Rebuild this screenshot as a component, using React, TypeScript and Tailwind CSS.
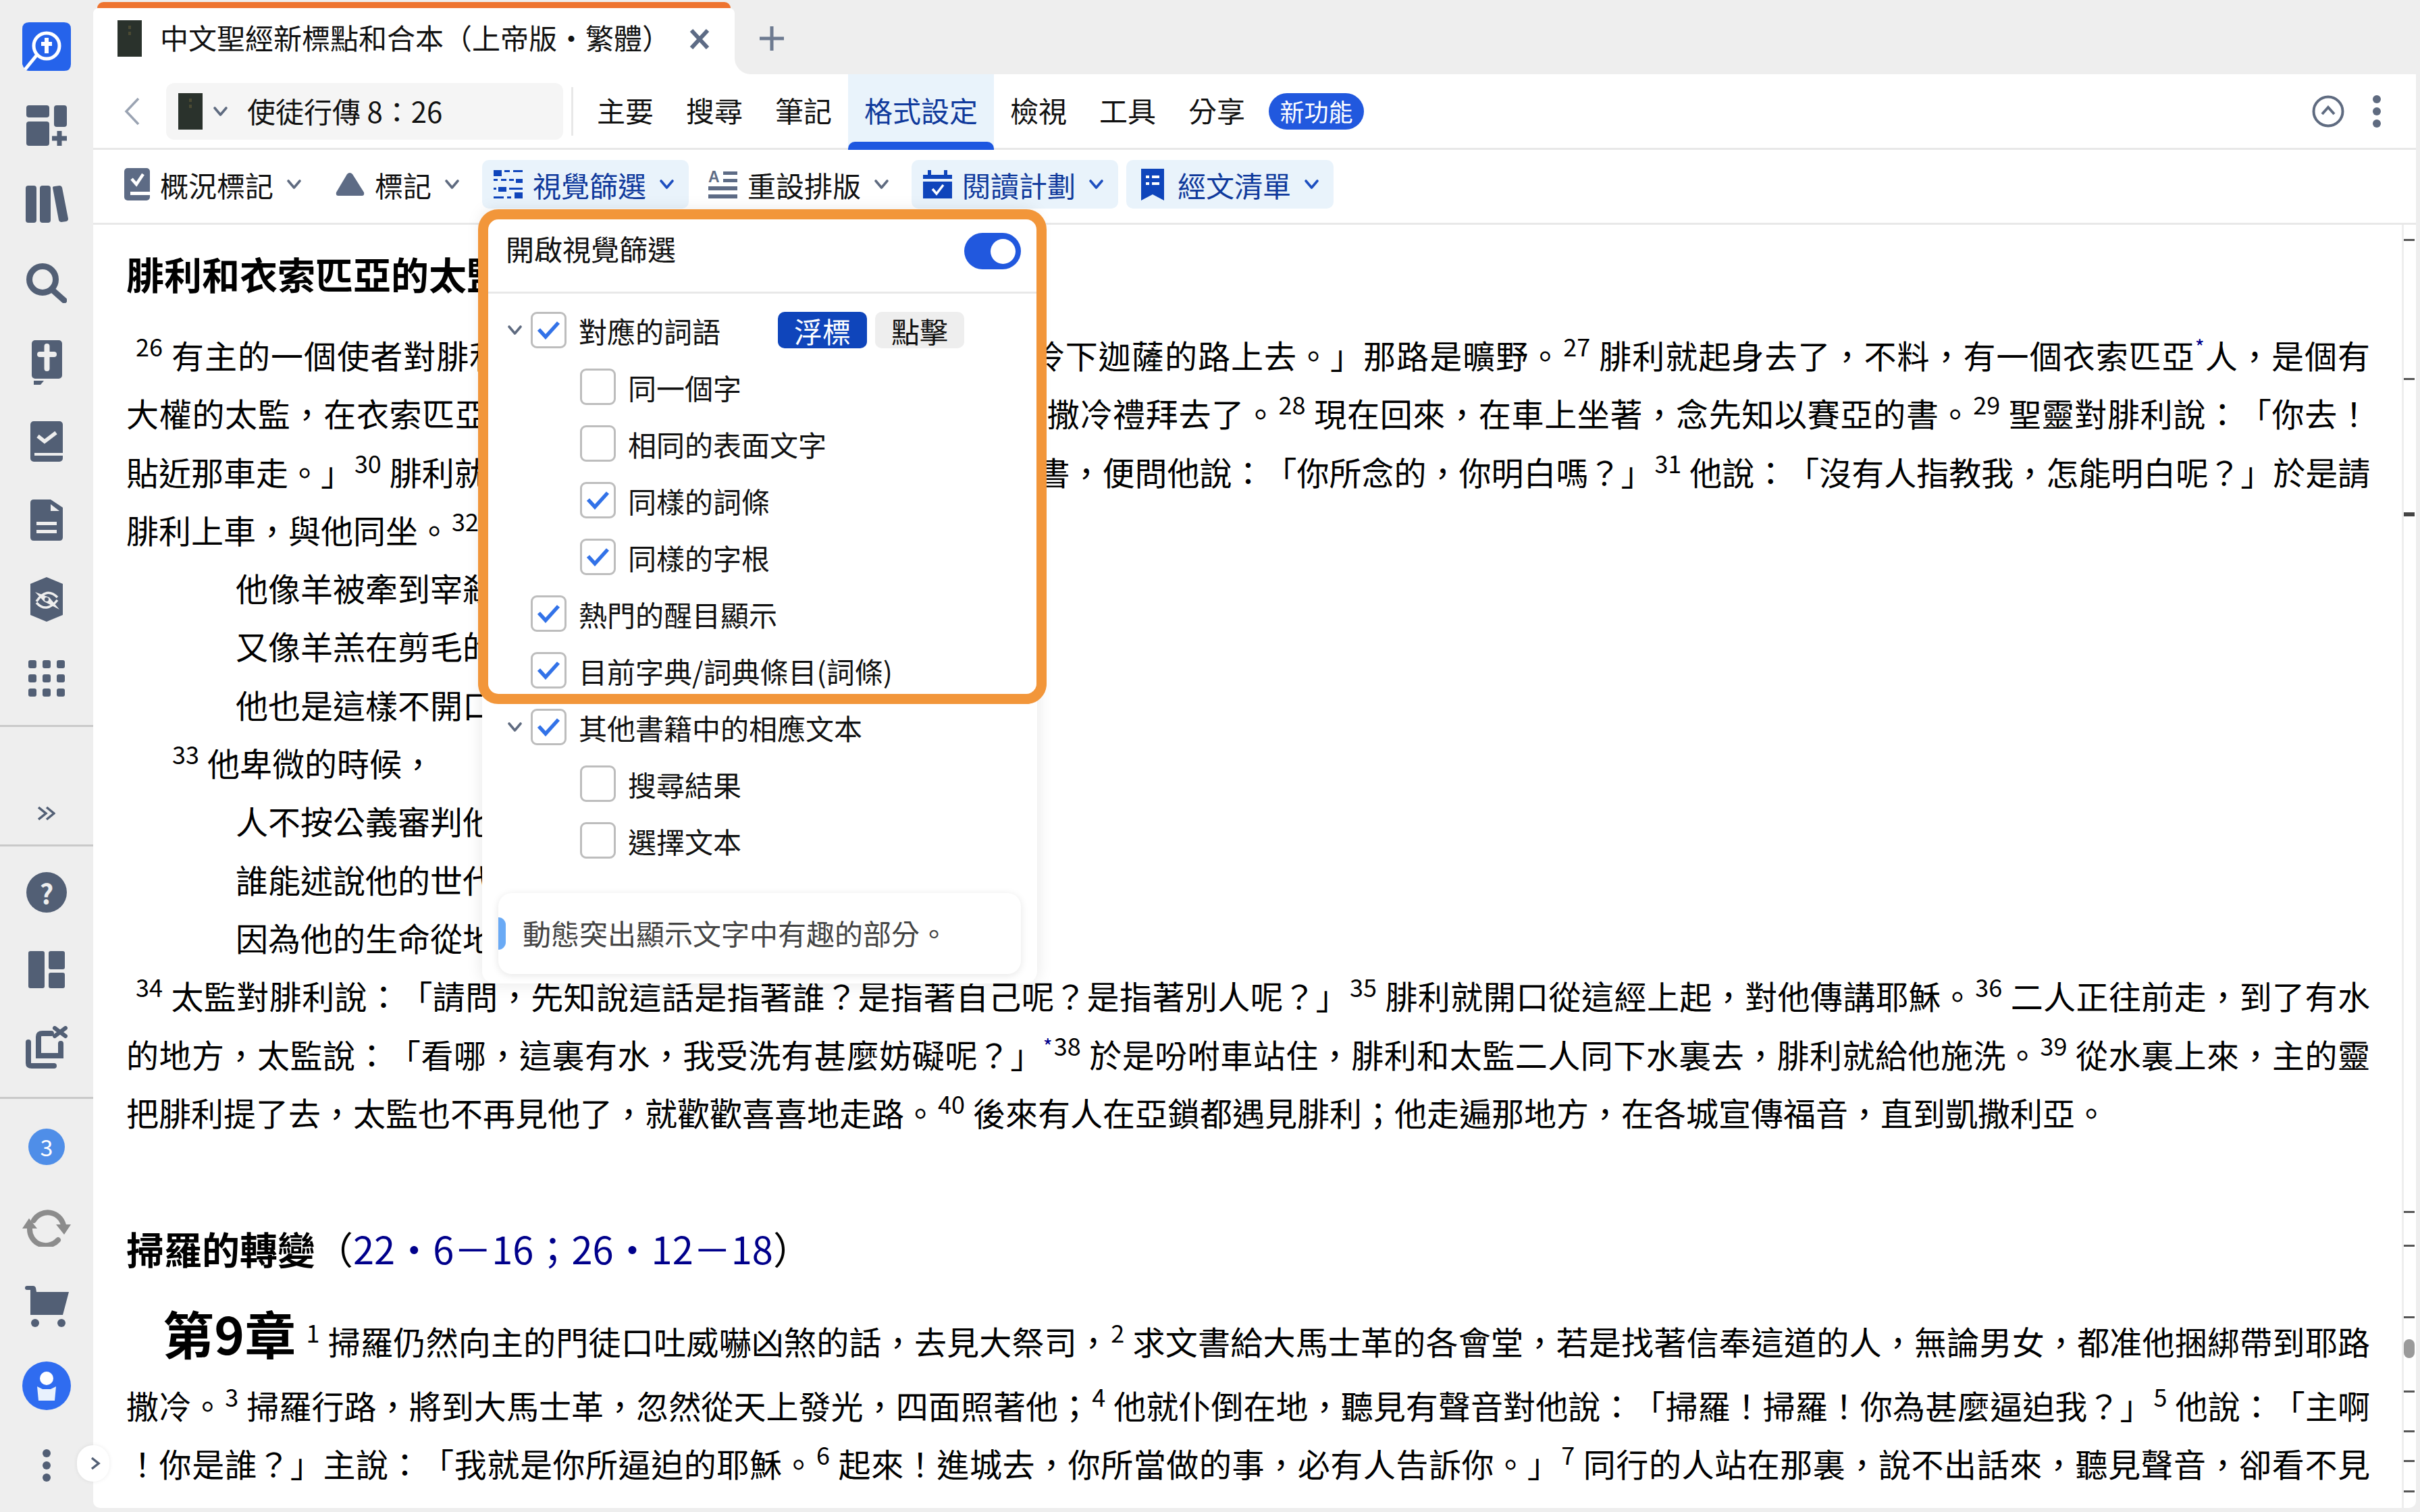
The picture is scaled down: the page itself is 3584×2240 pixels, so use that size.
import React from "react";

const railGray = "#525f75";
const iconGray = "#5d6b85";
const deepBlue = "#0f45bb";

const Chevron = ({ color = "#5f6b80" }: { color?: string }) => (
  <svg width="23" height="16" viewBox="0 0 23 16" fill="none" className="shrink-0">
    <path d="M3 3 L11.5 13 L20 3" stroke={color} strokeWidth="3.6" strokeLinecap="round" strokeLinejoin="round" />
  </svg>
);

const BookThumb = () => (
  <div className="flex h-[54px] w-[36px] shrink-0 flex-col items-center gap-[4px] bg-[#2a322c] pt-[8px]">
    <span className="h-[5px] w-[4px] bg-[#4b4a33]" />
    <span className="h-[5px] w-[4px] bg-[#4b4a33]" />
  </div>
);

/* rail icons */
const Logo = () => (
  <svg width="72" height="72" viewBox="0 0 72 72">
    <path d="M10 0 H62 Q72 0 72 10 V62 Q72 72 62 72 H10 Q3 72 0 62 V10 Q0 0 10 0 Z" fill="#2563eb" />
    <circle cx="36" cy="35" r="19" fill="#2563eb" stroke="#fff" strokeWidth="5" />
    <path d="M22 48 L4 70" stroke="#fff" strokeWidth="5" />
    <path d="M36 23 V46 M28 32 H44" stroke="#fff" strokeWidth="6" />
  </svg>
);
const DashAdd = () => (
  <svg width="60" height="60" viewBox="0 0 60 60" fill={railGray}>
    <rect x="0" y="0" width="34" height="18" rx="4" />
    <rect x="41" y="0" width="19" height="32" rx="4" />
    <rect x="0" y="24" width="34" height="36" rx="4" />
    <path d="M49 38 V60 M38 49 H60" stroke={railGray} strokeWidth="7" />
  </svg>
);
const Books = () => (
  <svg width="63" height="55" viewBox="0 0 63 55" fill={railGray}>
    <rect x="0" y="0" width="16" height="55" rx="4" />
    <rect x="21" y="0" width="16" height="55" rx="4" />
    <path d="M40 3 Q40 1 43 1 L50 0 Q53 0 54 3 L63 49 Q63 52 60 53 L53 54 Q50 54 49 51 Z" />
  </svg>
);
const SearchIcon = () => (
  <svg width="60" height="59" viewBox="0 0 60 59" fill="none" stroke={railGray}>
    <circle cx="24" cy="24" r="19.5" strokeWidth="9" />
    <path d="M38 39 L56 55" strokeWidth="9" strokeLinecap="round" />
  </svg>
);
const BibleIcon = () => (
  <svg width="45" height="66" viewBox="0 0 45 66" fill={railGray}>
    <rect x="0" y="0" width="45" height="57" rx="5" />
    <path d="M3 60 H18 L13 66 H3 Z" />
    <path d="M22.5 9 V42 M12 21 H33" stroke="#eeeeee" strokeWidth="8" strokeLinecap="round" />
  </svg>
);
const NotebookIcon = () => (
  <svg width="48" height="60" viewBox="0 0 48 60" fill={railGray}>
    <rect x="0" y="0" width="48" height="60" rx="5" />
    <path d="M11 22 L21 30 L38 17" fill="none" stroke="#eeeeee" strokeWidth="5.5" />
    <rect x="6" y="47" width="42" height="4" fill="#eeeeee" />
  </svg>
);
const DocIcon = () => (
  <svg width="48" height="61" viewBox="0 0 48 61" fill={railGray}>
    <path d="M5 0 H30 L48 12 V56 Q48 61 43 61 H5 Q0 61 0 56 V5 Q0 0 5 0 Z" />
    <path d="M30 7 L43 17 H30 Z" fill="#eeeeee" />
    <rect x="9" y="33" width="30" height="5" fill="#eeeeee" />
    <rect x="9" y="45" width="30" height="5" fill="#eeeeee" />
  </svg>
);
const CompassIcon = () => (
  <svg width="48" height="66" viewBox="0 0 48 66">
    <path d="M24 0 L48 10 V56 L24 66 L0 56 V10 Z" fill={railGray} />
    <path d="M9 36 Q24 14 40 30 M40 34 Q24 54 9 38" fill="none" stroke="#eeeeee" strokeWidth="3.5" />
    <path d="M7 22 L28 30 L43 48 L20 36 Z" fill="#eeeeee" />
    <circle cx="24" cy="33" r="3" fill={railGray} />
  </svg>
);
const AppsGrid = () => (
  <svg width="54" height="54" viewBox="0 0 54 54" fill={railGray}>
    {[0, 21, 42].map((y) =>
      [0, 21, 42].map((x) => <rect key={`${x}-${y}`} x={x} y={y} width="12" height="12" rx="3" />)
    )}
  </svg>
);
const PanelsIcon = () => (
  <svg width="54" height="55" viewBox="0 0 54 55" fill={railGray}>
    <rect x="0" y="0" width="24" height="55" rx="3" />
    <rect x="30" y="0" width="24" height="27" rx="3" />
    <rect x="30" y="32" width="24" height="23" rx="3" />
  </svg>
);
const CloseAllIcon = () => (
  <svg width="62" height="63" viewBox="0 0 62 63" fill="none" stroke={railGray}>
    <path d="M4 24 V55 Q4 59 9 59 H42" strokeWidth="8" strokeLinecap="round" />
    <path d="M38 11 H25 Q19 11 19 16 V44 H52 V26" strokeWidth="8" strokeLinecap="round" />
    <path d="M43 3 L59 15 M59 3 L43 15" strokeWidth="6" strokeLinecap="round" />
  </svg>
);
const SyncIcon = () => (
  <svg width="72" height="60" viewBox="0 0 72 60" fill="#8c8c8c">
    <path d="M17 21 A24 24 0 0 1 61 28 M11 33 A24 24 0 0 0 53 50" fill="none" stroke="#8c8c8c" strokeWidth="8" strokeLinecap="round" />
    <path d="M0 33 H22 L10 18 Z M50 27 H72 L62 42 Z" />
  </svg>
);
const CartIcon = () => (
  <svg width="65" height="61" viewBox="0 0 65 61" fill={railGray}>
    <path d="M3 0 H12 Q15 0 16 3 L17 9 H65 L56 43 H8 V6 H3 Q0 6 0 3 Q0 0 3 0 Z" />
    <ellipse cx="15" cy="55" rx="6" ry="6" />
    <ellipse cx="54" cy="55" rx="6" ry="6" />
  </svg>
);
const UserIcon = () => (
  <svg width="72" height="72" viewBox="0 0 72 72">
    <circle cx="36" cy="36" r="36" fill="#2f6cf0" />
    <circle cx="36" cy="25" r="10" fill="#fff" />
    <path d="M22 37 L30 41 H42 L50 37 L48 58 H24 Z" fill="#e8f1fd" />
  </svg>
);

/* toolbar icons */
const SummaryIcon = () => (
  <svg width="38" height="48" viewBox="0 0 38 48" fill={iconGray}>
    <rect x="0" y="0" width="38" height="48" rx="5" />
    <rect x="9" y="35" width="29" height="5" fill="#fff" />
    <path d="M11 16 L18 24 L28 9" fill="none" stroke="#fff" strokeWidth="4.5" />
  </svg>
);
const TriangleIcon = () => (
  <svg width="43" height="36" viewBox="0 0 43 36" fill={iconGray}>
    <path d="M17 3 Q21 -1 25 3 L42 30 Q43 35 39 35 H4 Q0 35 1 30 Z" />
  </svg>
);
const FilterIcon = () => (
  <svg width="43" height="42" viewBox="0 0 43 42" fill={deepBlue}>
    <rect x="0" y="0" width="12" height="9" />
    <rect x="16" y="0" width="8" height="3" />
    <rect x="29" y="0" width="14" height="3" />
    <rect x="0" y="13" width="6" height="3" />
    <rect x="11" y="13" width="8" height="3" />
    <rect x="23" y="13" width="7" height="3" />
    <rect x="33" y="13" width="10" height="6" />
    <rect x="0" y="26" width="4" height="3" />
    <rect x="7" y="25" width="12" height="7" />
    <rect x="23" y="26" width="20" height="3" />
    <rect x="0" y="39" width="15" height="3" />
    <rect x="20" y="39" width="6" height="3" />
    <rect x="31" y="33" width="12" height="9" />
  </svg>
);
const ResetIcon = () => (
  <svg width="43" height="42" viewBox="0 0 43 42" fill={iconGray}>
    <text x="0" y="18" fontSize="23" fontWeight="700" fontFamily="'Liberation Sans', sans-serif">A</text>
    <rect x="22" y="2" width="21" height="5" />
    <rect x="22" y="13" width="21" height="5" />
    <rect x="0" y="24" width="43" height="6" />
    <rect x="0" y="36" width="43" height="6" />
  </svg>
);
const PlanIcon = () => (
  <svg width="43" height="42" viewBox="0 0 43 42" fill={deepBlue}>
    <rect x="7" y="0" width="5" height="7" />
    <rect x="31" y="0" width="5" height="7" />
    <rect x="0" y="7" width="43" height="6" />
    <rect x="0" y="17" width="43" height="25" />
    <path d="M14 28 L20 35 L30 22" fill="none" stroke="#fff" strokeWidth="3.5" />
  </svg>
);
const ListIcon = () => (
  <svg width="44" height="47" viewBox="0 0 44 47" fill={deepBlue}>
    <path d="M5 0 H39 V47 L22 38 L5 47 Z" />
    <rect x="12" y="10" width="5" height="4" fill="#fff" />
    <rect x="21" y="10" width="11" height="4" fill="#fff" />
    <rect x="12" y="20" width="5" height="4" fill="#fff" />
    <rect x="21" y="20" width="11" height="4" fill="#fff" />
  </svg>
);

const Slot = ({ h, children }: { h: string; children: React.ReactNode }) => (
  <div className={`flex items-center justify-center ${h}`}>{children}</div>
);

const Rail = () => (
  <aside className="flex w-[138px] shrink-0 flex-col bg-[#eeeeee]">
    <div className="pt-[10px]">
      {[<Logo />, <DashAdd />, <Books />, <SearchIcon />, <BibleIcon />, <NotebookIcon />, <DocIcon />, <CompassIcon />, <AppsGrid />].map((icon, i) => (
        <Slot key={i} h="h-[117px]">{icon}</Slot>
      ))}
    </div>
    <div className="mt-[11px] h-[3px] bg-[#c9c9c9]" />
    <div className="flex h-[174px] items-end justify-center pb-[35px]">
      <svg width="26" height="22" viewBox="0 0 26 22" fill="none" stroke={railGray} strokeWidth="3.5">
        <path d="M1 2 L12 11 L1 20 M13 2 L24 11 L13 20" />
      </svg>
    </div>
    <div className="h-[3px] bg-[#c9c9c9]" />
    <div className="pt-[10px]">
      <Slot h="h-[115px]">
        <div className="flex h-[60px] w-[60px] items-center justify-center rounded-full bg-[#525f75] text-[40px] leading-none font-bold text-[#eeeeee]">?</div>
      </Slot>
      <Slot h="h-[115px]"><PanelsIcon /></Slot>
      <Slot h="h-[115px]"><CloseAllIcon /></Slot>
    </div>
    <div className="mt-[16px] h-[3px] bg-[#c9c9c9]" />
    <div className="pt-[12px]">
      <Slot h="h-[118px]">
        <div className="flex h-[54px] w-[54px] items-center justify-center rounded-full bg-[#4f8ee8] text-[34px] leading-none text-white">3</div>
      </Slot>
      <Slot h="h-[118px]"><SyncIcon /></Slot>
      <Slot h="h-[118px]"><CartIcon /></Slot>
      <Slot h="h-[118px]"><UserIcon /></Slot>
      <Slot h="h-[118px]">
        <div className="flex flex-col gap-[6px]">
          <span className="h-[12px] w-[12px] rounded-full bg-[#525f75]" />
          <span className="h-[12px] w-[12px] rounded-full bg-[#525f75]" />
          <span className="h-[12px] w-[12px] rounded-full bg-[#525f75]" />
        </div>
      </Slot>
    </div>
  </aside>
);

const TabBar = () => (
  <div className="flex h-[110px] shrink-0 bg-white">
    <div className="flex w-[950px] shrink-0 flex-col bg-[#eeeeee]">
      <div className="mx-[6px] mt-[3px] h-[9px] shrink-0 rounded-t-[14px] bg-[#ee7430]" />
      <div className="flex flex-1 items-start rounded-t-[8px] bg-white pl-[36px] pt-[18px]">
        <BookThumb />
        <span className="ml-[27px] w-[758px] text-[42px] leading-[50px] text-[#111]">
          中文聖經新標點和合本（上帝版<span className="inline-block w-[42px] text-center">·</span>繁體）
        </span>
        <svg width="30" height="30" viewBox="0 0 30 30" fill="none" stroke={iconGray} strokeWidth="6" className="ml-[26px] mt-[13px]">
          <path d="M3 2 L27 28 M27 2 L3 28" />
        </svg>
      </div>
    </div>
    <div className="flex flex-1 items-start rounded-bl-[24px] bg-[#eeeeee] pl-[37px] pt-[39px]">
      <svg width="36" height="36" viewBox="0 0 36 36" fill="none" stroke="#6d7a90" strokeWidth="5">
        <path d="M18 0 V36 M0 18 H36" />
      </svg>
    </div>
  </div>
);

const mainTabs = ["主要", "搜尋", "筆記", "格式設定", "檢視", "工具", "分享"];

const NavRow = () => (
  <div className="flex h-[109px] shrink-0 items-center pl-[46px] pr-[52px]">
    <svg width="24" height="42" viewBox="0 0 24 42" fill="none" stroke="#9aa3b2" strokeWidth="3.5" className="shrink-0">
      <path d="M21 2 L3 21 L21 40" />
    </svg>
    <div className="ml-[38px] flex h-[84px] w-[588px] shrink-0 items-center rounded-[12px] bg-[#f5f5f5] pl-[18px]">
      <BookThumb />
      <span className="ml-[15px]"><Chevron /></span>
      <span className="ml-[28px] pb-[2px] text-[42px] text-[#111]">使徒行傳 8：26</span>
    </div>
    <div className="ml-[12px] h-[72px] w-[3px] shrink-0 bg-[#e8e8e8]" />
    <div className="ml-[11px] flex h-full shrink-0 items-stretch">
      {mainTabs.map((tab) =>
        tab === "格式設定" ? (
          <div key={tab} className="relative flex items-center bg-[#e9f3fb] px-[24px] pb-[4px] text-[42px] text-[#103a9c]">
            {tab}
            <span className="absolute bottom-[-3px] left-0 h-[12px] w-full rounded-t-[10px] bg-[#1d57e0]" />
          </div>
        ) : (
          <div key={tab} className="flex items-center px-[24px] pb-[4px] text-[42px] text-[#111]">{tab}</div>
        )
      )}
    </div>
    <div className="ml-[11px] flex h-[54px] w-[141px] shrink-0 items-center justify-center rounded-full bg-[#2158de] pb-[2px] text-[36px] text-white">新功能</div>
    <div className="ml-auto flex items-center gap-[42px]">
      <svg width="48" height="48" viewBox="0 0 48 48" fill="none" stroke="#5f6b80" strokeWidth="4">
        <circle cx="24" cy="24" r="21.5" />
        <path d="M15 28 L24 18 L33 28" />
      </svg>
      <div className="flex flex-col gap-[6px]">
        <span className="h-[12px] w-[12px] rounded-full bg-[#5f6b80]" />
        <span className="h-[12px] w-[12px] rounded-full bg-[#5f6b80]" />
        <span className="h-[12px] w-[12px] rounded-full bg-[#5f6b80]" />
      </div>
    </div>
  </div>
);

const ToolButton = ({ icon, label, active }: { icon: React.ReactNode; label: string; active?: boolean }) => (
  <div
    className={`flex h-[72px] items-center gap-[15px] rounded-[10px] pl-[17px] pr-[21px] text-[42px] ${
      active ? "bg-[#e9f3fb] text-[#103a9c]" : "text-[#111]"
    }`}
  >
    {icon}
    <span className="mr-[4px]">{label}</span>
    <Chevron color={active ? "#1d4fc0" : "#5f6b80"} />
  </div>
);

const FormatRow = () => (
  <div className="flex h-[108px] shrink-0 items-center gap-[12px] pl-[29px] pb-[6px]">
    <ToolButton icon={<SummaryIcon />} label="概況標記" />
    <ToolButton icon={<TriangleIcon />} label="標記" />
    <ToolButton icon={<FilterIcon />} label="視覺篩選" active />
    <ToolButton icon={<ResetIcon />} label="重設排版" />
    <ToolButton icon={<PlanIcon />} label="閱讀計劃" active />
    <ToolButton icon={<ListIcon />} label="經文清單" active />
  </div>
);

/* verse number */
const V = ({ n, first }: { n: string; first?: boolean }) => (
  <span className={`align-[18px] text-[36px] leading-[0] mr-[12px] ${first ? "ml-[14px]" : "ml-[2px]"}`}>{n}</span>
);

const Star = () => <span className="align-[20px] text-[30px] leading-[0] text-[#00008b]">*</span>;

const RefDot = () => <span className="inline-block w-[56px] text-center">·</span>;

const Just = ({ children, tight }: { children: React.ReactNode; tight?: boolean }) => (
  <div className={`h-[86.3px] overflow-hidden text-justify leading-[86.3px] [text-align-last:justify] ${tight ? "tracking-[-0.2px]" : ""}`}>{children}</div>
);
const Plain = ({ children, indent = "" }: { children: React.ReactNode; indent?: string }) => (
  <div className={`h-[86.3px] leading-[86.3px] ${indent}`}>{children}</div>
);

const Reader = () => (
  <div className="relative min-h-0 flex-1 overflow-hidden pl-[49px] pr-[68px] pt-[29px] text-[48px] text-black">
    <div className="h-[86px] text-[56px] leading-[86px] font-bold">腓利和衣索匹亞的太監</div>
    <div className="mt-[34px]">
      <Just>
        <V n="26" first />有主的一個使者對腓利說：「起來！向南走，往那從耶路撒冷下迦薩的路上去。」那路是曠野。<V n="27" />腓利就起身去了，不料，有一個衣索匹亞<Star />人，是個有
      </Just>
      <Just>
        大權的太監，在衣索匹亞女王干大基的手下總管銀庫。他上耶路撒冷禮拜去了。<V n="28" />現在回來，在車上坐著，念先知以賽亞的書。<V n="29" />聖靈對腓利說：「你去！
      </Just>
      <Just tight>
        貼近那車走。」<V n="30" />腓利就跑到太監那裏，聽見他念先知以賽亞的書，便問他說：「你所念的，你明白嗎？」<V n="31" />他說：「沒有人指教我，怎能明白呢？」於是請
      </Just>
      <Plain>腓利上車，與他同坐。<V n="32" />他所念的那段經就是說：</Plain>
      <Plain indent="pl-[162px]">他像羊被牽到宰殺之地，</Plain>
      <Plain indent="pl-[162px]">又像羊羔在剪毛的人手下無聲；</Plain>
      <Plain indent="pl-[162px]">他也是這樣不開口。</Plain>
      <Plain indent="pl-[66px]"><V n="33" />他卑微的時候，</Plain>
      <Plain indent="pl-[162px]">人不按公義審判他；</Plain>
      <Plain indent="pl-[162px]">誰能述說他的世代？</Plain>
      <Plain indent="pl-[162px]">因為他的生命從地上奪去。</Plain>
      <Just>
        <V n="34" first />太監對腓利說：「請問，先知說這話是指著誰？是指著自己呢？是指著別人呢？」<V n="35" />腓利就開口從這經上起，對他傳講耶穌。<V n="36" />二人正往前走，到了有水
      </Just>
      <Just>
        的地方，太監說：「看哪，這裏有水，我受洗有甚麼妨礙呢？」<Star /><V n="38" />於是吩咐車站住，腓利和太監二人同下水裏去，腓利就給他施洗。<V n="39" />從水裏上來，主的靈
      </Just>
      <Plain>
        把腓利提了去，太監也不再見他了，就歡歡喜喜地走路。<V n="40" />後來有人在亞鎖都遇見腓利；他走遍那地方，在各城宣傳福音，直到凱撒利亞。
      </Plain>
    </div>
    <div className="mt-[116px] h-[86px] text-[56px] leading-[86px]">
      <span className="font-bold">掃羅的轉變</span>（<span className="text-[#00008b]">22<RefDot />6－16；26<RefDot />12－18</span>）
    </div>
    <div className="mt-[43px]">
      <div className="h-[103px] pl-[54px] text-justify leading-[103px] [text-align-last:justify]">
        <span className="mr-[13px] text-[76px] leading-[0] font-bold">第9章</span>
        <V n="1" />掃羅仍然向主的門徒口吐威嚇凶煞的話，去見大祭司，<V n="2" />求文書給大馬士革的各會堂，若是找著信奉這道的人，無論男女，都准他捆綁帶到耶路
      </div>
      <Just>
        撒冷。<V n="3" />掃羅行路，將到大馬士革，忽然從天上發光，四面照著他；<V n="4" />他就仆倒在地，聽見有聲音對他說：「掃羅！掃羅！你為甚麼逼迫我？」<V n="5" />他說：「主啊
      </Just>
      <Just>
        ！你是誰？」主說：「我就是你所逼迫的耶穌。<V n="6" />起來！進城去，你所當做的事，必有人告訴你。」<V n="7" />同行的人站在那裏，說不出話來，聽見聲音，卻看不見
      </Just>
      <div className="mt-[4px]">
        <Just>
          人。<V n="8" />掃羅從地上起來，睜開眼睛，竟不能看見甚麼。有人拉他的手，領他進大馬士革；<V n="9" />他三日不能看見，也不吃也不喝。<V n="10" />當下，在大馬士革有一個門徒
        </Just>
      </div>
    </div>
  </div>
);

/* visual filter dropdown */
const Check = ({ on }: { on?: boolean }) => (
  <span className="flex h-[54px] w-[53px] shrink-0 items-center justify-center rounded-[9px] border-[3px] border-[#bdbdbd] bg-white">
    {on && (
      <svg width="34" height="28" viewBox="0 0 34 28" fill="none" stroke="#3272e8" strokeWidth="5.5">
        <path d="M2 13 L12 24 L31 3" />
      </svg>
    )}
  </span>
);

type FilterItem = { label: string; on?: boolean; sub?: boolean; caret?: boolean; modes?: boolean };

const filterItems: FilterItem[] = [
  { label: "對應的詞語", on: true, caret: true, modes: true },
  { label: "同一個字", sub: true },
  { label: "相同的表面文字", sub: true },
  { label: "同樣的詞條", on: true, sub: true },
  { label: "同樣的字根", on: true, sub: true },
  { label: "熱門的醒目顯示", on: true },
  { label: "目前字典/詞典條目(詞條)", on: true },
  { label: "其他書籍中的相應文本", on: true, caret: true },
  { label: "搜尋結果", sub: true },
  { label: "選擇文本", sub: true },
];

const FilterRow = ({ item }: { item: FilterItem }) => (
  <div className={`flex h-[84px] items-center ${item.sub ? "pl-[145px]" : "pl-[36px]"}`}>
    {!item.sub && (
      <span className="mr-[12px] flex w-[24px] justify-center">
        {item.caret && <Chevron />}
      </span>
    )}
    <Check on={item.on} />
    <span className="ml-[18px] text-[42px] text-[#111]">{item.label}</span>
    {item.modes && (
      <div className="ml-[85px] flex gap-[12px]">
        <span className="flex h-[54px] w-[132px] items-center justify-center rounded-[10px] bg-[#0f45bb] text-[42px] text-white">浮標</span>
        <span className="flex h-[54px] w-[132px] items-center justify-center rounded-[10px] bg-[#eeeeee] text-[42px] text-[#111]">點擊</span>
      </div>
    )}
  </div>
);

const FilterMenu = () => (
  <div className="absolute left-[714px] top-[312px] w-[822px] rounded-[18px] bg-white pb-[14px] shadow-[0_0_24px_rgba(0,0,0,0.1)]">
    <div className="flex h-[120px] items-center justify-between pl-[35px] pr-[24px]">
      <span className="pb-[10px] text-[42px] text-[#111]">開啟視覺篩選</span>
      <span className="flex h-[54px] w-[84px] items-center justify-end rounded-full bg-[#2158de] pr-[8px]">
        <span className="h-[37px] w-[37px] rounded-full bg-white" />
      </span>
    </div>
    <div className="h-[3px] bg-[#e8e8e8]" />
    <div className="pt-[12px]">
      {filterItems.map((item) => (
        <FilterRow key={item.label} item={item} />
      ))}
    </div>
    <div className="relative mx-[24px] mt-[36px] flex h-[120px] items-center rounded-[20px] bg-white pb-[4px] pl-[36px] text-[42px] text-[#444] shadow-[0_2px_12px_rgba(0,0,0,0.1)]">
      <span className="absolute left-0 top-[36px] h-[48px] w-[11px] rounded-r-full bg-[#6aaaf5]" />
      動態突出顯示文字中有趣的部分。
    </div>
  </div>
);

const scrollMarks = [354, 560, 1794, 1844, 1950, 2060, 2119, 2163, 2208];

const App = () => (
  <div className="relative flex h-[2240px] w-[3584px] overflow-hidden bg-[#eeeeee] font-['Noto_Sans_CJK_TC','Noto_Sans',sans-serif] [text-spacing-trim:space-all]">
    <Rail />
    <div className="flex w-[3446px] flex-col">
      <TabBar />
      <main className="flex h-[2124px] w-[3440px] flex-col overflow-hidden rounded-b-[10px] bg-white">
        <NavRow />
        <div className="h-[3px] shrink-0 bg-[#e8e8e8]" />
        <FormatRow />
        <div className="h-[3px] shrink-0 bg-[#e8e8e8]" />
        <Reader />
      </main>
    </div>

    {/* scrollbar annotation strip */}
    <div className="absolute left-[3557px] top-[333px] h-[1901px] w-[3px] bg-[#eeeeee]" />
    {scrollMarks.map((top) => (
      <span key={top} className="absolute left-[3560px] h-[3px] w-[16px] bg-[#555]" style={{ top }} />
    ))}
    <span className="absolute left-[3560px] top-[759px] h-[6px] w-[16px] bg-[#444]" />
    <span className="absolute left-[3560px] top-[1984px] h-[28px] w-[16px] rounded-full bg-[#9a9a9a]" />

    <FilterMenu />
    <div className="pointer-events-none absolute left-[708px] top-[310px] h-[733px] w-[842px] rounded-[30px] border-[15px] border-[#f2963a]" />

    <div className="absolute left-[114px] top-[2141px] flex h-[54px] w-[48px] items-center justify-center rounded-full bg-white pl-[6px] shadow-[0_0_6px_rgba(0,0,0,0.08)]">
      <svg width="15" height="20" viewBox="0 0 15 20" fill="none" stroke={railGray} strokeWidth="3.5">
        <path d="M2 2 L12 10 L2 18" />
      </svg>
    </div>
  </div>
);

export default App;
